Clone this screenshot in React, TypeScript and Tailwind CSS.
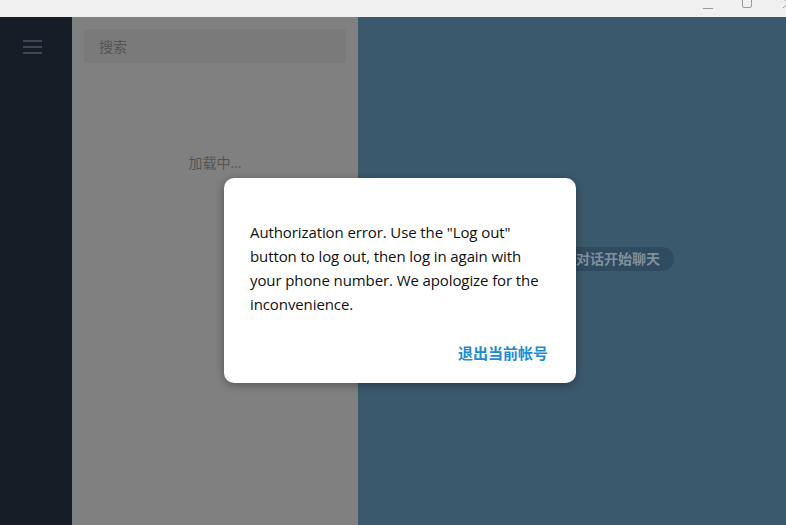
import React from 'react';

const font = { fontFamily: '"Open Sans", "Noto Sans CJK SC", sans-serif' };

function TitleBar() {
  return (
    <div className="h-[17px] bg-[#f0f0f0] flex items-start justify-end overflow-hidden">
      <div className="flex items-start gap-[29px]">
        <div className="w-[10px] h-px bg-[#9a9a9a] mt-[8px]" />
        <div className="w-[10px] h-[10px] border border-[#9a9a9a] rounded-[2px] -mt-[2px]" />
        <div className="w-[4px] h-[17px] relative overflow-hidden ml-px">
          <svg width="12" height="12" viewBox="0 0 12 12" className="absolute left-0 -top-[3px]">
            <path d="M1 1L11 11M11 1L1 11" stroke="#9a9a9a" strokeWidth="1" />
          </svg>
        </div>
      </div>
    </div>
  );
}

function Sidebar() {
  return (
    <div className="w-[72px] bg-[#161d27] flex flex-col pl-[23px] pt-[23px]">
      <div className="flex flex-col gap-[4px] w-[19px]">
        <div className="h-[2px] bg-[#3e4855]" />
        <div className="h-[2px] bg-[#3e4855]" />
        <div className="h-[2px] bg-[#3e4855]" />
      </div>
    </div>
  );
}

function ChatList() {
  return (
    <div className="w-[286px] bg-[#808080] flex flex-col px-[12px] pt-[12px]">
      <div className="h-[34px] rounded-[4px] bg-[#7a7a7a] flex items-center px-[15px] text-[14px] text-[#545454]">
        搜索
      </div>
      <div className="mt-[89px] text-center text-[14px] text-[#545454]">加载中...</div>
    </div>
  );
}

function ChatArea() {
  return (
    <div className="flex-1 bg-[#3b596d] flex items-center justify-center pb-[25px]">
      <div className="h-[24px] rounded-full bg-[#2f4b5f] pl-[22px] pr-[14px] flex items-center text-[14px] font-semibold text-[#80909b] whitespace-nowrap">
        请从左侧选择对话开始聊天
      </div>
    </div>
  );
}

function ErrorDialog() {
  return (
    <div className="absolute left-[224px] top-[178px] w-[352px] h-[205px] bg-white rounded-[10px] shadow-[0_2px_10px_rgba(0,0,0,0.35)] flex flex-col px-[26px] pt-[42px]">
      <p className="text-[15px] leading-[24px] tracking-[-0.1px] text-[#111]">
        Authorization error. Use the "Log out" button to log out, then log in again with your phone number. We apologize for the inconvenience.
      </p>
      <div className="flex justify-end mt-[26px] pr-[2px]">
        <span className="text-[15px] font-bold text-[#1b8cd6]">退出当前帐号</span>
      </div>
    </div>
  );
}

export default function App() {
  return (
    <div className="w-[786px] h-[525px] overflow-hidden flex flex-col relative" style={font}>
      <TitleBar />
      <div className="flex-1 flex">
        <Sidebar />
        <ChatList />
        <ChatArea />
      </div>
      <ErrorDialog />
    </div>
  );
}
